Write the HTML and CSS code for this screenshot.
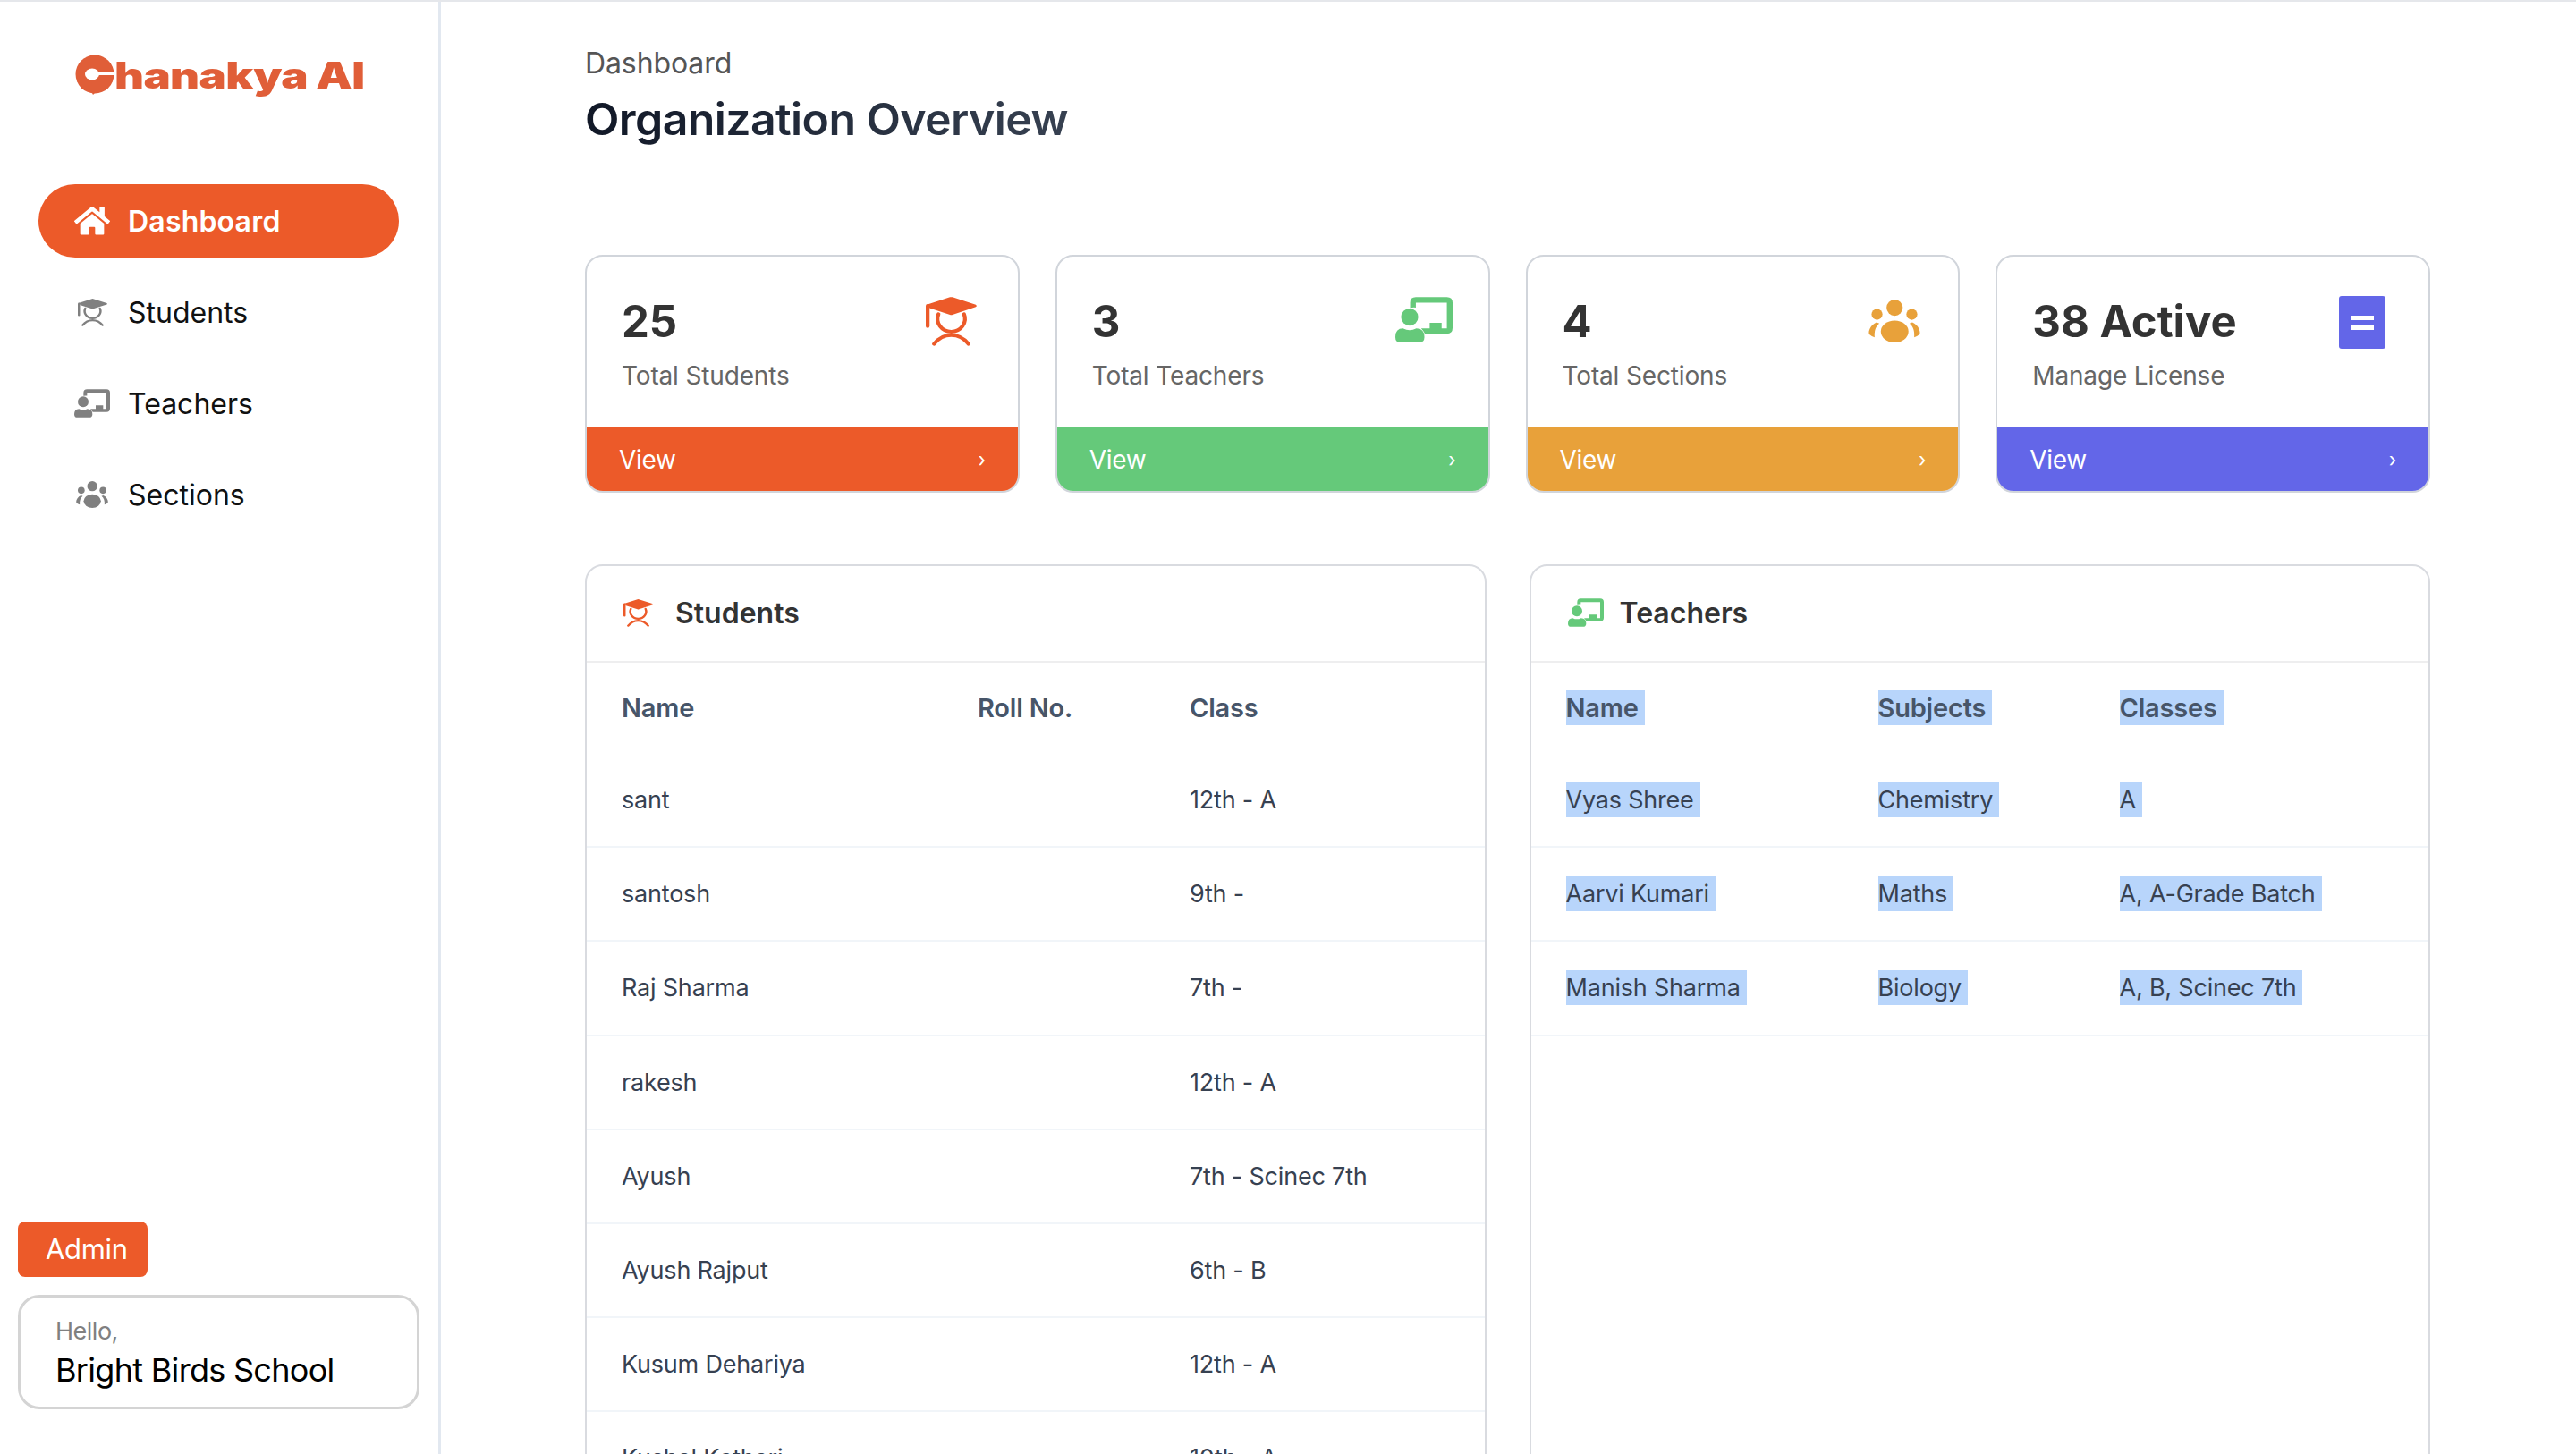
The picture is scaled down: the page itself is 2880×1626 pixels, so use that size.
FILE: index.html
```html
<!DOCTYPE html>
<html lang="en">
<head>
    <meta charset="UTF-8">
    <meta name="viewport" content="width=device-width, initial-scale=1.0">
    <title>Chanakya AI - Dashboard</title>
    <link rel="stylesheet" href="styles.css">
</head>
<body>
    <svg class="icon-defs" aria-hidden="true">
        <symbol id="icon-home" viewBox="0 0 576 512">
            <path fill="currentColor" d="M280.37 148.26L96 300.11V464a16 16 0 0 0 16 16l112.06-.29a16 16 0 0 0 15.92-16V368a16 16 0 0 1 16-16h64a16 16 0 0 1 16 16v95.64a16 16 0 0 0 16 16.05L464 480a16 16 0 0 0 16-16V300L295.67 148.26a12.19 12.19 0 0 0-15.3 0zM571.6 251.47L488 182.56V44.05a12 12 0 0 0-12-12h-56a12 12 0 0 0-12 12v72.61L318.47 43a48 48 0 0 0-61 0L4.34 251.47a12 12 0 0 0-1.6 16.9l25.5 31A12 12 0 0 0 45.15 301l235.22-193.74a12.19 12.19 0 0 1 15.3 0L530.9 301a12 12 0 0 0 16.9-1.6l25.5-31a12 12 0 0 0-1.7-16.93z"/>
        </symbol>
        <symbol id="icon-student" viewBox="0 0 160 165" preserveAspectRatio="none">
            <path fill="currentColor" d="M76 1 Q80 0 84 1 L157 26 Q162 30 157 34 L84 60 Q80 62 76 60 L14 38 L11 37 V32 L3 26 Z"/>
            <path fill="none" stroke="currentColor" stroke-width="12" stroke-linecap="round" d="M6 30 V98"/>
            <path fill="none" stroke="currentColor" stroke-width="12" stroke-linecap="round" d="M40 58 A43 43 0 1 0 120 58"/>
            <path fill="none" stroke="currentColor" stroke-width="12" stroke-linecap="round" d="M26 158 C40 138 60 128 80 128 C100 128 120 138 134 158"/>
        </symbol>
        <symbol id="icon-teacher" viewBox="0 0 120 95">
            <circle fill="currentColor" cx="30" cy="42" r="18"/>
            <path fill="currentColor" d="M0 84 Q0 66 16 66 Q30 73 44 66 Q61 66 61 84 Q61 95 50 95 H10 Q0 95 0 84 Z"/>
            <path fill="currentColor" d="M31 12 Q31 0 43 0 H108 Q120 0 120 12 V65 Q120 77 108 77 H62 Q59 71 54 66 H72 V54 H97 V66 H108 V12 H43 V22 Q37 21 31 23 Z"/>
        </symbol>
        <symbol id="icon-sections" viewBox="0 0 107 90">
            <circle fill="currentColor" cx="54" cy="17" r="17"/>
            <circle fill="currentColor" cx="17" cy="31" r="11.5"/>
            <circle fill="currentColor" cx="90" cy="31" r="11.5"/>
            <ellipse fill="currentColor" cx="54" cy="67" rx="29" ry="23"/>
            <path fill="currentColor" d="M16 48 C6 52 0 62 0 70 C0 74 6 77 12 79 C11 66 14 56 22 50 Z"/>
            <path fill="currentColor" d="M91 48 C101 52 107 62 107 70 C107 74 101 77 95 79 C96 66 93 56 85 50 Z"/>
        </symbol>
    </svg>

    <div class="app">
        <aside class="sidebar">
            <div class="logo">
                <svg class="logo-mark" viewBox="0 0 44 44" aria-hidden="true">
                    <circle cx="22" cy="21" r="21.5" fill="#e05e38"/>
                    <path d="M18 40 L24 40 L20 44 Z" fill="#e05e38"/>
                    <ellipse cx="19" cy="21" rx="8" ry="6.5" fill="#fff"/>
                    <rect x="19" y="18.5" width="26" height="3.5" fill="#fff"/>
                </svg>
                <span class="logo-text">hanakya AI</span>
            </div>

            <nav class="nav">
                <a class="nav-item active" href="#">
                    <span class="nav-icon"><svg class="ic-home"><use href="#icon-home"/></svg></span>
                    Dashboard
                </a>
                <a class="nav-item" href="#">
                    <span class="nav-icon"><svg class="ic-student"><use href="#icon-student"/></svg></span>
                    Students
                </a>
                <a class="nav-item" href="#">
                    <span class="nav-icon"><svg class="ic-teacher"><use href="#icon-teacher"/></svg></span>
                    Teachers
                </a>
                <a class="nav-item" href="#">
                    <span class="nav-icon"><svg class="ic-sections"><use href="#icon-sections"/></svg></span>
                    Sections
                </a>
            </nav>

            <div class="sidebar-foot">
                <span class="role-badge">Admin</span>
                <div class="hello-box">
                    <div class="hello">Hello,</div>
                    <div class="school">Bright Birds School</div>
                </div>
            </div>
        </aside>

        <main class="main">
            <div class="crumb">Dashboard</div>
            <h1 class="page-title">Organization Overview</h1>

            <section class="stats">
                <div class="stat-card orange">
                    <div class="stat-body">
                        <div>
                            <div class="stat-value">25</div>
                            <div class="stat-label">Total Students</div>
                        </div>
                        <svg class="stat-icon stat-student"><use href="#icon-student"/></svg>
                    </div>
                    <a class="stat-link" href="#"><span>View</span><span class="chev">›</span></a>
                </div>
                <div class="stat-card green">
                    <div class="stat-body">
                        <div>
                            <div class="stat-value">3</div>
                            <div class="stat-label">Total Teachers</div>
                        </div>
                        <svg class="stat-icon stat-teacher"><use href="#icon-teacher"/></svg>
                    </div>
                    <a class="stat-link" href="#"><span>View</span><span class="chev">›</span></a>
                </div>
                <div class="stat-card amber">
                    <div class="stat-body">
                        <div>
                            <div class="stat-value">4</div>
                            <div class="stat-label">Total Sections</div>
                        </div>
                        <svg class="stat-icon stat-sections"><use href="#icon-sections"/></svg>
                    </div>
                    <a class="stat-link" href="#"><span>View</span><span class="chev">›</span></a>
                </div>
                <div class="stat-card indigo">
                    <div class="stat-body">
                        <div>
                            <div class="stat-value">38 Active</div>
                            <div class="stat-label">Manage License</div>
                        </div>
                        <div class="license-icon"><i></i><i></i></div>
                    </div>
                    <a class="stat-link" href="#"><span>View</span><span class="chev">›</span></a>
                </div>
            </section>

            <section class="panels">
                <div class="panel">
                    <div class="panel-header">
                        <svg class="panel-icon orange-text"><use href="#icon-student"/></svg>
                        Students
                    </div>
                    <table class="data-table students-table">
                        <colgroup><col class="col-a"><col class="col-b"><col></colgroup>
                        <thead>
                            <tr><th>Name</th><th>Roll No.</th><th>Class</th></tr>
                        </thead>
                        <tbody>
                            <tr><td>sant</td><td></td><td>12th - A</td></tr>
                            <tr><td>santosh</td><td></td><td>9th -</td></tr>
                            <tr><td>Raj Sharma</td><td></td><td>7th -</td></tr>
                            <tr><td>rakesh</td><td></td><td>12th - A</td></tr>
                            <tr><td>Ayush</td><td></td><td>7th - Scinec 7th</td></tr>
                            <tr><td>Ayush Rajput</td><td></td><td>6th - B</td></tr>
                            <tr><td>Kusum Dehariya</td><td></td><td>12th - A</td></tr>
                            <tr><td>Kushal Kathari</td><td></td><td>10th - A</td></tr>
                        </tbody>
                    </table>
                </div>

                <div class="panel">
                    <div class="panel-header">
                        <svg class="panel-icon green-text"><use href="#icon-teacher"/></svg>
                        Teachers
                    </div>
                    <table class="data-table teachers-table">
                        <colgroup><col class="col-a"><col class="col-b"><col></colgroup>
                        <thead>
                            <tr>
                                <th><span class="sel">Name</span></th>
                                <th><span class="sel">Subjects</span></th>
                                <th><span class="sel">Classes</span></th>
                            </tr>
                        </thead>
                        <tbody>
                            <tr>
                                <td><span class="sel">Vyas Shree</span></td>
                                <td><span class="sel">Chemistry</span></td>
                                <td><span class="sel">A</span></td>
                            </tr>
                            <tr>
                                <td><span class="sel">Aarvi Kumari</span></td>
                                <td><span class="sel">Maths</span></td>
                                <td><span class="sel">A, A-Grade Batch</span></td>
                            </tr>
                            <tr>
                                <td><span class="sel">Manish Sharma</span></td>
                                <td><span class="sel">Biology</span></td>
                                <td><span class="sel">A, B, Scinec 7th</span></td>
                            </tr>
                        </tbody>
                    </table>
                </div>
            </section>
        </main>
    </div>
</body>
</html>
```

FILE: styles.css
```css
* {
    margin: 0;
    padding: 0;
    box-sizing: border-box;
}

html, body {
    height: 100%;
    overflow: hidden;
}

body {
    font-family: Inter, "Noto Sans", sans-serif;
    background: #fff;
    color: #1f2937;
}

a {
    color: inherit;
    text-decoration: none;
}

.icon-defs {
    display: none;
}

.app {
    display: flex;
    height: 100vh;
    border-top: 2px solid #e5e7eb;
    overflow: hidden;
}

/* sidebar */
.sidebar {
    flex: 0 0 493px;
    display: flex;
    flex-direction: column;
    border-right: 3px solid #e2e8f0;
}

.logo {
    height: 204px;
    padding: 60px 0 0 84px;
    display: flex;
    align-items: flex-start;
}

.logo-mark {
    width: 44px;
    height: 44px;
    flex: none;
}

.logo-text {
    display: inline-block;
    margin-top: -3px;
    font-weight: 900;
    font-size: 41px;
    line-height: 50px;
    color: #e05e38;
    transform: scaleX(1.24);
    transform-origin: left center;
    letter-spacing: -0.5px;
}

.nav {
    display: flex;
    flex-direction: column;
    gap: 20px;
    padding: 0 44px 0 43px;
}

.nav-item {
    height: 82px;
    display: flex;
    align-items: center;
    gap: 20px;
    padding-left: 40px;
    border-radius: 41px;
    font-size: 32px;
    color: #111;
}

.nav-item.active {
    background: #ec5a29;
    color: #fff;
    font-weight: 600;
    letter-spacing: 0.2px;
}

.nav-icon {
    width: 40px;
    display: flex;
    justify-content: center;
    color: #808080;
}

.active .nav-icon {
    color: #fff;
}

.ic-home {
    width: 40px;
    height: 36px;
}

.ic-student {
    width: 33px;
    height: 31px;
}

.ic-teacher {
    width: 40px;
    height: 32px;
}

.ic-sections {
    width: 36px;
    height: 30px;
}

.sidebar-foot {
    margin-top: auto;
    padding: 0 21px 50px 20px;
    display: flex;
    flex-direction: column;
    align-items: flex-start;
}

.role-badge {
    height: 62px;
    line-height: 62px;
    padding: 0 22px 0 31px;
    margin-bottom: 20px;
    border-radius: 8px;
    background: #ec5a29;
    color: #fff;
    font-size: 31px;
    letter-spacing: -0.3px;
}

.hello-box {
    width: 100%;
    padding: 20px 39px 16px;
    border: 3px solid #d4d4d4;
    border-radius: 24px;
}

.hello {
    font-size: 27px;
    line-height: 36px;
    letter-spacing: -0.5px;
    color: #808080;
}

.school {
    font-size: 36px;
    line-height: 50px;
    letter-spacing: -0.7px;
    color: #000;
}

/* main */
.main {
    flex: 1;
    min-width: 0;
    padding: 49px 163px 0 161px;
}

.crumb {
    font-size: 32px;
    line-height: 40px;
    letter-spacing: -0.1px;
    color: #555;
}

.page-title {
    margin-top: 12px;
    font-size: 50px;
    line-height: 60px;
    font-weight: 600;
    letter-spacing: -0.6px;
    width: fit-content;
    background: linear-gradient(90deg, #111827, #374151);
    -webkit-background-clip: text;
    background-clip: text;
    color: transparent;
}

.stats {
    margin-top: 122px;
    display: grid;
    grid-template-columns: repeat(4, 1fr);
    gap: 40px;
}

.stat-card {
    height: 266px;
    display: flex;
    flex-direction: column;
    border: 2px solid #d1d5db;
    border-radius: 20px;
    overflow: hidden;
}

.stat-body {
    flex: 1;
    display: flex;
    justify-content: space-between;
    align-items: flex-start;
    padding: 43px 40px 0 39px;
}

.stat-value {
    font-size: 49px;
    line-height: 60px;
    font-weight: 700;
    color: #333;
}

.stat-label {
    margin-top: 10px;
    font-size: 28px;
    line-height: 40px;
    letter-spacing: -0.15px;
    color: #666;
}

.stat-icon {
    flex: none;
}

.stat-student {
    width: 57px;
    height: 55px;
    margin: 2px 6px 0 0;
}

.stat-teacher {
    width: 64px;
    height: 51px;
    margin-top: 2px;
}

.stat-sections {
    width: 58px;
    height: 48px;
    margin: 5px 2px 0 0;
}

.license-icon {
    width: 52px;
    height: 59px;
    margin: 1px 8px 0 0;
    display: flex;
    flex-direction: column;
    align-items: center;
    justify-content: center;
    gap: 6px;
    border-radius: 3px;
    background: #6366e8;
}

.license-icon i {
    width: 25px;
    height: 5px;
    background: #fff;
}

.stat-link {
    height: 71px;
    flex: none;
    display: flex;
    justify-content: space-between;
    align-items: center;
    padding: 0 36px;
    color: #fff;
    font-size: 28px;
    letter-spacing: -0.3px;
}

.chev {
    font-size: 22px;
}

.orange .stat-link { background: #ec5a29; }
.orange .stat-icon { color: #ec5a29; }
.green .stat-link { background: #65c97a; }
.green .stat-icon { color: #65c97a; }
.amber .stat-link { background: #e8a13a; }
.amber .stat-icon { color: #e8a13a; }
.indigo .stat-link { background: #6366e8; }

.orange-text { color: #ec5a29; }
.green-text { color: #65c97a; }

.panels {
    margin-top: 80px;
    display: grid;
    grid-template-columns: 1fr 1fr;
    gap: 48px;
    height: 1200px;
}

.panel {
    border: 2px solid #d9dbe0;
    border-radius: 20px;
}

.panel-header {
    height: 108px;
    padding: 0 0 2px 41px;
    display: flex;
    align-items: center;
    gap: 25px;
    border-bottom: 2px solid #eeeeef;
    font-size: 32px;
    font-weight: 600;
    color: #333;
}

.panel-icon {
    width: 33px;
    height: 31px;
    flex: none;
}

.panel-icon.green-text {
    width: 40px;
    height: 32px;
    margin-right: -7px;
}

.data-table {
    width: 100%;
    table-layout: fixed;
    border-collapse: collapse;
}

.students-table .col-a { width: 437px; }
.students-table .col-b { width: 237px; }
.teachers-table .col-a { width: 388px; }
.teachers-table .col-b { width: 270px; }

.data-table th,
.data-table td {
    text-align: left;
    vertical-align: middle;
}

.data-table th:first-child,
.data-table td:first-child {
    padding-left: 39px;
}

.data-table th {
    height: 101px;
    font-size: 29px;
    font-weight: 600;
    letter-spacing: -0.2px;
    color: #475569;
}

.data-table td {
    height: 105.2px;
    border-bottom: 2px solid #f1f5f9;
    font-size: 27px;
    letter-spacing: -0.2px;
    color: #374151;
}

.sel {
    display: inline-block;
    height: 39px;
    line-height: 39px;
    padding-right: 7px;
    background: #b8d5fb;
}
```
